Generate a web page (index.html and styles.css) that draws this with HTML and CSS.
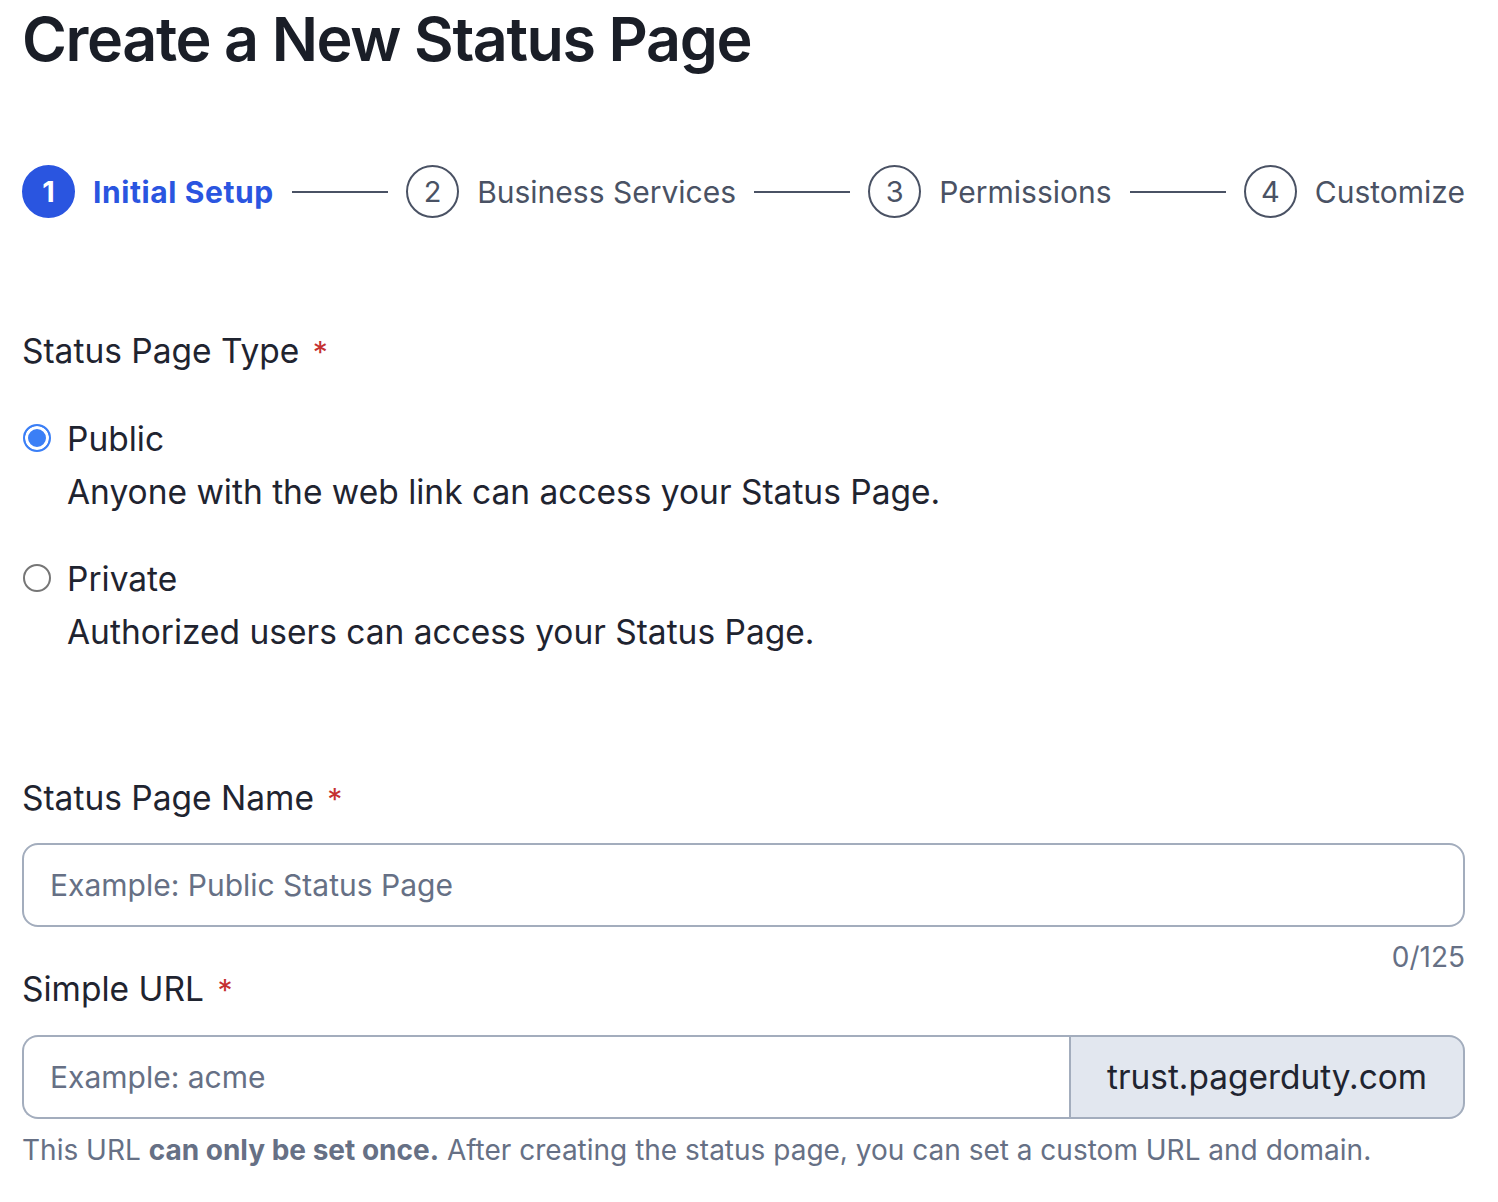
FILE: index.html
```html
<!DOCTYPE html>
<html lang="en">
<head>
    <meta charset="UTF-8">
    <meta name="viewport" content="width=device-width, initial-scale=1.0">
    <title>Create a New Status Page</title>
    <link rel="stylesheet" href="styles.css">
</head>
<body>
    <div class="page">
        <h1 class="page-title">Create a New Status Page</h1>

        <!-- wizard steps -->
        <ol class="stepper">
            <li class="step active">
                <span class="step-num">1</span>
                <span class="step-label">Initial Setup</span>
            </li>
            <li class="step-line"></li>
            <li class="step">
                <span class="step-num">2</span>
                <span class="step-label">Business Services</span>
            </li>
            <li class="step-line"></li>
            <li class="step">
                <span class="step-num">3</span>
                <span class="step-label">Permissions</span>
            </li>
            <li class="step-line"></li>
            <li class="step">
                <span class="step-num">4</span>
                <span class="step-label">Customize</span>
            </li>
        </ol>

        <form class="form">
            <fieldset class="field type-field">
                <legend class="field-label">Status Page Type <span class="req">*</span></legend>

                <label class="radio">
                    <input type="radio" name="type" value="public" checked>
                    <span class="radio-text">
                        <span class="radio-title">Public</span>
                        <span class="radio-desc">Anyone with the web link can access your Status Page.</span>
                    </span>
                </label>

                <label class="radio">
                    <input type="radio" name="type" value="private">
                    <span class="radio-text">
                        <span class="radio-title">Private</span>
                        <span class="radio-desc">Authorized users can access your Status Page.</span>
                    </span>
                </label>
            </fieldset>

            <div class="field name-field">
                <label class="field-label" for="pageName">Status Page Name <span class="req">*</span></label>
                <input class="text-input" id="pageName" type="text" placeholder="Example: Public Status Page">
                <div class="counter">0/125</div>
            </div>

            <div class="field url-field">
                <label class="field-label" for="pageUrl">Simple URL <span class="req">*</span></label>
                <div class="input-group">
                    <input class="text-input" id="pageUrl" type="text" placeholder="Example: acme">
                    <span class="addon">trust.pagerduty.com</span>
                </div>
                <p class="hint">This URL <strong>can only be set once.</strong> After creating the status page, you can set a custom URL and domain.</p>
            </div>
        </form>
    </div>
</body>
</html>
```

FILE: styles.css
```css
body {
    margin: 0;
    font-family: Inter, "Noto Sans", sans-serif;
    color: #1f2430;
    background: #fff;
}
.page {
    width: 1443px;
    padding: 0 0 0 22px;
}
.page-title {
    font-size: 61px;
    font-weight: 600;
    letter-spacing: -1.4px;
    color: #1a1e27;
    margin: 0;
    padding-top: 1px;
    line-height: 76px;
}

/* stepper */
.stepper {
    list-style: none;
    display: flex;
    align-items: center;
    gap: 18px;
    margin: 88px 0 0;
    padding: 0;
}
.step {
    display: flex;
    align-items: center;
    gap: 18px;
    flex-shrink: 0;
    white-space: nowrap;
}
.step-num {
    width: 49px;
    height: 49px;
    border: 2px solid #4a5264;
    border-radius: 50%;
    display: flex;
    align-items: center;
    justify-content: center;
    font-size: 29px;
    color: #4a5264;
}
.step-label {
    font-size: 30px;
    color: #4a5264;
}
.step.active .step-num {
    background: #2a55e0;
    border-color: #2a55e0;
    color: #fff;
    font-weight: 700;
}
.step.active .step-label {
    color: #2a55e0;
    font-weight: 700;
    letter-spacing: 0.6px;
}
.step-line {
    flex: 1 1 98px;
    height: 2px;
    background: #4a5264;
}

/* form */
.form {
    margin-top: 113px;
}
.field {
    border: 0;
    margin: 0;
    padding: 0;
}
.field-label {
    display: block;
    padding: 0;
    font-size: 33.5px;
    line-height: 40px;
    color: #1f2430;
}
.req {
    color: #c53030;
    font-size: 30px;
    margin-left: 4px;
}
.radio {
    display: flex;
    align-items: flex-start;
    gap: 16px;
    margin-top: 47px;
    cursor: pointer;
}
.radio input {
    appearance: none;
    box-sizing: border-box;
    flex-shrink: 0;
    width: 28px;
    height: 28px;
    margin: 5px 0 0 1px;
    border: 2.5px solid #767676;
    border-radius: 50%;
    background: #fff;
}
.radio input:checked {
    border-color: #3b7ff6;
    background: #3b7ff6;
    box-shadow: inset 0 0 0 3px #fff;
}
.radio-text {
    display: flex;
    flex-direction: column;
    gap: 13px;
}
.radio-title,
.radio-desc {
    font-size: 33.5px;
    line-height: 40px;
}
.name-field {
    margin-top: 126px;
}
.name-field .field-label {
    margin-bottom: 24px;
}
.text-input {
    box-sizing: border-box;
    width: 100%;
    height: 84px;
    border: 2px solid #a3adbd;
    border-radius: 16px;
    padding: 0 26px;
    font-family: inherit;
    font-size: 30px;
    color: #1f2430;
    outline: none;
}
.text-input::placeholder {
    color: #667085;
}
.counter {
    text-align: right;
    font-size: 28px;
    line-height: 36px;
    color: #667085;
    margin-top: 12px;
}
.url-field {
    margin-top: -6px;
}
.url-field .field-label {
    margin-bottom: 25px;
}
.input-group {
    display: flex;
}
.input-group .text-input {
    flex: 1;
    border-radius: 16px 0 0 16px;
    border-right: 0;
}
.addon {
    display: flex;
    align-items: center;
    box-sizing: border-box;
    height: 84px;
    padding: 0 36px;
    background: #e2e7ef;
    border: 2px solid #a3adbd;
    border-radius: 0 16px 16px 0;
    font-size: 33.4px;
    color: #1f2430;
}
.hint {
    margin: 13px 0 0;
    font-size: 28px;
    line-height: 36px;
    color: #667085;
}
.hint strong {
    font-weight: 700;
}
```
